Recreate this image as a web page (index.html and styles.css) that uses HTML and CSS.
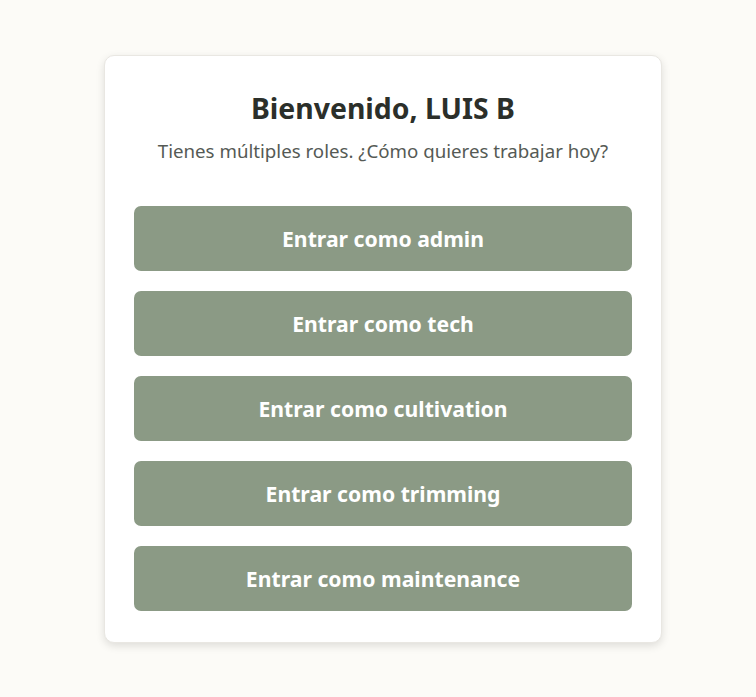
FILE: index.html
```html
<!DOCTYPE html>
<html lang="es">
<head>
<meta charset="utf-8">
<title>Seleccionar rol</title>
<link rel="stylesheet" href="styles.css">
</head>
<body>
<main class="page">
  <section class="card">
    <h1 class="title">Bienvenido, LUIS B</h1>
    <p class="subtitle">Tienes múltiples roles. ¿Cómo quieres trabajar hoy?</p>
    <div class="roles">
      <button class="role-btn">Entrar como admin</button>
      <button class="role-btn">Entrar como tech</button>
      <button class="role-btn">Entrar como cultivation</button>
      <button class="role-btn">Entrar como trimming</button>
      <button class="role-btn">Entrar como maintenance</button>
    </div>
  </section>
</main>
</body>
</html>
```

FILE: styles.css
```css
* { box-sizing: border-box; }
html, body { margin: 0; padding: 0; }
body {
  background: #fcfbf7;
  font-family: "Noto Sans", "Open Sans", sans-serif;
  color: #2b2f2a;
}
.page {
  min-height: 697px;
  display: flex;
  align-items: center;
  justify-content: center;
  padding-left: 10px;
}
.card {
  width: 558px;
  background: #ffffff;
  border: 1px solid #e9e7e2;
  border-radius: 10px;
  box-shadow: 0 3px 8px rgba(0, 0, 0, 0.12);
  padding: 30px 29px 31px;
  text-align: center;
}
.title {
  margin: 0;
  font-size: 28.4px;
  font-weight: 700;
  line-height: 44px;
  color: #2b2f2a;
}
.subtitle {
  margin: 7px 0 0;
  font-size: 18.7px;
  line-height: 28px;
  color: #555a55;
}
.roles {
  margin-top: 41px;
  display: flex;
  flex-direction: column;
  gap: 20px;
}
.role-btn {
  height: 65px;
  border: none;
  border-radius: 7px;
  background: #8b9a85;
  color: #ffffff;
  font-family: inherit;
  font-size: 21.2px;
  font-weight: 700;
  cursor: pointer;
}
```
